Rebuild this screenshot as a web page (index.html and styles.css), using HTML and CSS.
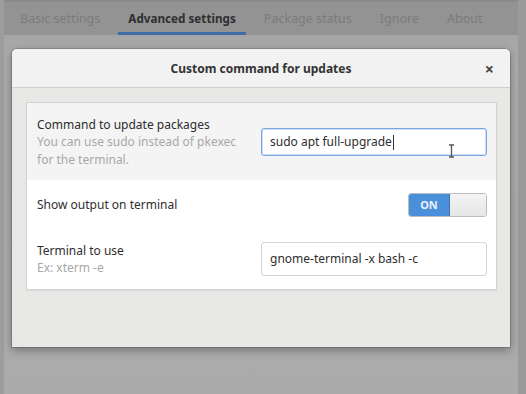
FILE: index.html
```html
<!DOCTYPE html>
<html>
<head>
  <title>Custom command for updates</title>
  <link rel="stylesheet" href="styles.css">
</head>
<body>
  <div class="jendela">
    <!-- Tab -->
    <div class="tab-bar">
      <div class="tab">Basic settings</div>
      <div class="tab aktif">Advanced settings</div>
      <div class="tab">Package status</div>
      <div class="tab">Ignore</div>
      <div class="tab">About</div>
    </div>

    <div class="halaman">
      <div class="dialog">
        <div class="dialog-kepala">
          <div class="dialog-judul">Custom command for updates</div>
          <div class="tutup">&#215;</div>
        </div>
        <div class="dialog-isi">
          <div class="daftar">
            <div class="baris baris-pilih">
              <div class="teks">
                <div class="label">Command to update packages</div>
                <div class="sub">You can use sudo instead of pkexec<br>for the terminal.</div>
              </div>
              <div class="entri fokus">sudo apt full-upgrade<span class="kursor"></span>
                <svg class="ibeam" width="7" height="14" viewBox="0 0 7 14">
                  <path d="M1 1h5M3.5 1v12M1 13h5" stroke="#555" stroke-width="1.3" fill="none"/>
                </svg>
              </div>
            </div>
            <div class="baris baris-switch">
              <div class="teks">
                <div class="label">Show output on terminal</div>
              </div>
              <div class="saklar">
                <div class="saklar-on">ON</div>
                <div class="saklar-off"></div>
              </div>
            </div>
            <div class="baris baris-akhir">
              <div class="teks">
                <div class="label">Terminal to use</div>
                <div class="sub">Ex: xterm -e</div>
              </div>
              <div class="entri">gnome-terminal -x bash -c</div>
            </div>
          </div>
        </div>
      </div>
    </div>
  </div>
</body>
</html>
```

FILE: styles.css
```css
body {
  margin: 0;
  padding: 0;
  background: #a4a4a4;
  font-family: 'Noto Sans', 'DejaVu Sans', sans-serif;
  font-size: 12px;
  height: 394px;
  overflow: hidden;
}
.jendela {
  height: 394px;
  border-left: 4px solid #9d9d9d;
  border-right: 8px solid #9a9a9a;
  background: linear-gradient(to bottom, #9c9c9c, #acacac 60px, #ababab);
}
.tab-bar {
  display: flex;
  height: 33px;
  border-top: 2px solid #8a8a8a;
  background: #939393;
  padding-left: 6px;
  white-space: nowrap;
}
.tab {
  padding: 0 10px;
  line-height: 33px;
  margin-right: 8px;
  color: #7b7b7b;
  font-size: 12.5px;
}
.tab.aktif {
  color: #2f2f2f;
  font-weight: bold;
  font-size: 11.7px;
  box-shadow: inset 0 -3px 0 #3f6ea6;
}
.halaman {
  padding: 14px 8px 0 8px;
}
.dialog {
  height: 298px;
  background: #e8e8e7;
  border-radius: 5px 5px 0 0;
  box-shadow: 0 3px 10px rgba(0, 0, 0, 0.35), 0 0 0 1px rgba(0, 0, 0, 0.15);
  display: flex;
  flex-direction: column;
}
.dialog-kepala {
  height: 38px;
  background: #f2f2f2;
  border-bottom: 1px solid #cfcfcf;
  border-radius: 5px 5px 0 0;
  display: flex;
  align-items: center;
  position: relative;
}
.dialog-judul {
  flex: 1;
  text-align: center;
  font-weight: bold;
  color: #333;
  font-size: 12px;
}
.tutup {
  position: absolute;
  right: 16px;
  top: 9px;
  font-size: 16px;
  font-weight: bold;
  color: #444;
}
.dialog-isi {
  padding: 14px 13px 0 14px;
}
.daftar {
  background: #fff;
  border: 1px solid #d3d3d3;
  box-shadow: 0 1px 1px rgba(0, 0, 0, 0.06);
}
.baris {
  display: flex;
  align-items: center;
  justify-content: space-between;
  padding: 0 9px 0 10px;
}
.baris-pilih {
  height: 77px;
  background: #f4f4f4;
}
.baris-switch {
  height: 48px;
}
.baris-akhir {
  height: 61px;
}
.label {
  color: #2e2e2e;
  line-height: 17px;
  margin-top: 1px;
}
.sub {
  color: #a8a8a8;
  line-height: 18px;
}
.entri {
  width: 226px;
  height: 34px;
  box-sizing: border-box;
  border: 1px solid #d4d4d4;
  border-radius: 3px;
  background: #fff;
  padding: 0 8px;
  line-height: 32px;
  color: #2e2e2e;
  position: relative;
  margin-top: 1px;
}
.entri.fokus {
  height: 28px;
  line-height: 26px;
  border: 1px solid #78a7e0;
  box-shadow: inset 0 0 0 1px #cfe0f5;
}
.kursor {
  display: inline-block;
  width: 1px;
  height: 15px;
  background: #333;
  vertical-align: middle;
  margin-left: 1px;
}
.ibeam {
  position: absolute;
  left: 186px;
  top: 15px;
}
.saklar {
  display: flex;
  width: 79px;
  height: 24px;
  box-sizing: border-box;
  border: 1px solid #b9bcc0;
  border-radius: 3px;
  overflow: hidden;
  margin-top: 2px;
}
.saklar-on {
  width: 40px;
  background: #4a8fda;
  color: #e8f0fa;
  font-size: 11px;
  font-weight: bold;
  text-align: center;
  line-height: 22px;
  border-right: 1px solid #3b72b0;
}
.saklar-off {
  flex: 1;
  background: linear-gradient(to bottom, #f4f4f4, #e6e6e6);
}
```
